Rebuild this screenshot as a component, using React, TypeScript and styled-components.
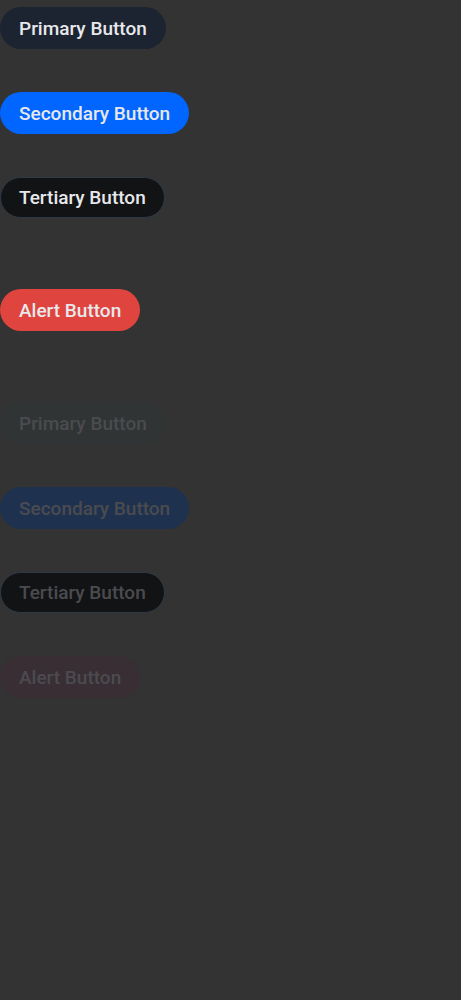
import React from "react";
import styled, { createGlobalStyle, css } from "styled-components";

const Global = createGlobalStyle`
  html, body { margin: 0; padding: 0; background: #333333; }
  body { font-family: Roboto, "Noto Sans", sans-serif; }
`;

type Variant = "primary" | "secondary" | "tertiary" | "alert";

const palette: Record<Variant, { bg: string; border: string; dbg: string; dborder: string; h: number }> = {
  primary: { bg: "#1b2430", border: "transparent", dbg: "#303434", dborder: "transparent", h: 42 },
  secondary: { bg: "#0066ff", border: "transparent", dbg: "#1e324f", dborder: "transparent", h: 42 },
  tertiary: { bg: "#121315", border: "#2e3a48", dbg: "#121315", dborder: "#2e3a48", h: 41 },
  alert: { bg: "#e0443e", border: "transparent", dbg: "#382e34", dborder: "transparent", h: 42 },
};

const Page = styled.div`
  display: flex;
  flex-direction: column;
  align-items: flex-start;
  padding-top: 7px;
`;

const Group = styled.div<{ $gapAfter: number }>`
  display: flex;
  flex-direction: column;
  align-items: flex-start;
  margin-bottom: ${(p) => p.$gapAfter}px;
`;

const Button = styled.button<{ $variant: Variant; $disabled?: boolean }>`
  box-sizing: border-box;
  height: ${(p) => palette[p.$variant].h}px;
  padding: 0 18px;
  border-radius: 21px;
  font-family: Roboto, "Noto Sans", sans-serif;
  font-size: 19px;
  font-weight: 500;
  line-height: 1;
  cursor: pointer;
  border: 1px solid ${(p) => palette[p.$variant].border};
  background: ${(p) => palette[p.$variant].bg};
  color: #e8e8ec;
  ${(p) =>
    p.$disabled &&
    css`
      cursor: default;
      background: ${palette[p.$variant].dbg};
      border-color: ${palette[p.$variant].dborder};
      color: #4b4b4f;
    `}
`;

const Stack = styled.div`
  display: flex;
  flex-direction: column;
  align-items: flex-start;
  gap: 43px;
`;

export default function App() {
  return (
    <>
      <Global />
      <Page>
        <Group $gapAfter={71}>
          <Stack>
            <Button $variant="primary">Primary Button</Button>
            <Button $variant="secondary">Secondary Button</Button>
            <Button $variant="tertiary">Tertiary Button</Button>
          </Stack>
        </Group>
        <Group $gapAfter={71}>
          <Button $variant="alert">Alert Button</Button>
        </Group>
        <Stack>
          <Button $variant="primary" $disabled disabled>Primary Button</Button>
          <Button $variant="secondary" $disabled disabled>Secondary Button</Button>
          <Button $variant="tertiary" $disabled disabled>Tertiary Button</Button>
          <Button $variant="alert" $disabled disabled>Alert Button</Button>
        </Stack>
      </Page>
    </>
  );
}
